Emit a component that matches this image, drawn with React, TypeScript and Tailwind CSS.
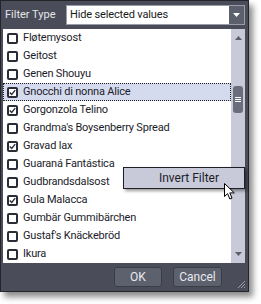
import React from "react";

const items: { name: string; checked: boolean }[] = [
    { name: "Fløtemysost", checked: false },
    { name: "Geitost", checked: false },
    { name: "Genen Shouyu", checked: false },
    { name: "Gnocchi di nonna Alice", checked: true },
    { name: "Gorgonzola Telino", checked: true },
    { name: "Grandma's Boysenberry Spread", checked: false },
    { name: "Gravad lax", checked: true },
    { name: "Guaraná Fantástica", checked: false },
    { name: "Gudbrandsdalsost", checked: false },
    { name: "Gula Malacca", checked: true },
    { name: "Gumbär Gummibärchen", checked: false },
    { name: "Gustaf's Knäckebröd", checked: false },
    { name: "Ikura", checked: false },
];

function CheckBox({ checked }: { checked: boolean }) {
    return (
        <div className="w-[11px] h-[11px] border-2 border-[#2b2d36] rounded-[2px] bg-white flex items-center justify-center shrink-0">
            {checked && (
                <svg width="9" height="9" viewBox="0 0 9 9">
                    <path d="M1 4.5 L3.5 7 L8 1.5" fill="none" stroke="#2b2d36" strokeWidth="1.8" />
                </svg>
            )}
        </div>
    );
}

export default function App() {
    return (
        <div className="relative w-[261px] h-[304px] bg-white" style={{ fontFamily: "Roboto, 'Liberation Sans', Arial, sans-serif" }}>
            <div className="w-[249px] h-[292px] bg-[#4a4d59] border border-[#23252b] shadow-[4px_5px_6px_rgba(0,0,0,0.45)] flex flex-col">
                {/* header */}
                <div className="h-[28px] flex items-center pl-[4px] pr-[3px] shrink-0">
                    <span className="text-[11px] text-[#e4e5ea]">Filter Type</span>
                    <div className="ml-auto w-[179px] h-[20px] border border-[#9a9ca8] bg-white flex">
                        <span className="flex-1 text-[11px] tracking-[-0.15px] text-[#1a1a1a] pl-[3px] leading-[18px]">Hide selected values</span>
                        <div className="w-[15px] bg-[#5c5f6c] flex items-center justify-center">
                            <svg width="7" height="4" viewBox="0 0 7 4"><path d="M0 0 L7 0 L3.5 4 Z" fill="#ffffff" /></svg>
                        </div>
                    </div>
                </div>
                {/* list */}
                <div className="ml-[2px] mr-[3px] h-[234px] bg-white flex overflow-hidden shrink-0">
                    <div className="flex-1">
                        {items.map((it, i) => (
                            <div
                                key={it.name}
                                className={
                                    i === 3
                                        ? "h-[18px] flex items-center gap-[5px] pl-[3px] bg-[#d5dbee] border border-dotted border-[#222]"
                                        : "h-[18px] flex items-center gap-[5px] pl-[4px]"
                                }
                            >
                                <CheckBox checked={it.checked} />
                                <span className="text-[11px] tracking-[-0.2px] text-[#1c1c2a] whitespace-nowrap">{it.name}</span>
                            </div>
                        ))}
                    </div>
                    <div className="w-[14px] bg-[#c8cad9] flex flex-col items-center shrink-0">
                        <svg className="mt-[7px]" width="7" height="4" viewBox="0 0 7 4"><path d="M0 4 L7 4 L3.5 0 Z" fill="#5c5f6c" /></svg>
                        <div className="mt-[46px] w-[10px] h-[27px] rounded-[3px] bg-[#6a6d7b] flex flex-col items-center justify-center gap-[1px]">
                            <div className="w-[6px] h-[1px] bg-white" />
                            <div className="w-[6px] h-[1px] bg-white" />
                            <div className="w-[6px] h-[1px] bg-white" />
                        </div>
                        <svg className="mt-auto mb-[7px]" width="7" height="4" viewBox="0 0 7 4"><path d="M0 0 L7 0 L3.5 4 Z" fill="#5c5f6c" /></svg>
                    </div>
                </div>
                {/* footer */}
                <div className="flex-1 flex items-center justify-end gap-[11px] pr-[26px] relative">
                    <button className="w-[48px] h-[20px] rounded-[3px] bg-[#5d606d] border border-[#3b3d46] text-[12px] text-[#e8e9ee]">OK</button>
                    <button className="w-[49px] h-[20px] rounded-[3px] bg-[#5d606d] border border-[#3b3d46] text-[12px] text-[#e8e9ee]">Cancel</button>
                    <svg className="absolute right-[2px] bottom-[2px]" width="10" height="10" viewBox="0 0 10 10">
                        <path d="M9 2 L2 9 M9 5 L5 9 M9 8 L8 9" stroke="#9a9ca8" strokeWidth="1" />
                    </svg>
                </div>
            </div>
            {/* context menu */}
            <div className="absolute left-[123px] top-[167px] w-[122px] h-[22px] bg-[#c8cad9] border border-[#1e1f24] shadow-[2px_2px_3px_rgba(0,0,0,0.4)] flex items-center justify-center">
                <span className="text-[12px] text-[#1c1c2a] pl-[10px]">Invert Filter</span>
            </div>
            {/* cursor */}
            <svg className="absolute left-[224px] top-[183px]" width="12" height="18" viewBox="0 0 12 18">
                <path d="M0.5 0.5 L0.5 13.5 L3.6 10.6 L5.8 16 L8 15.1 L5.8 9.9 L10.3 9.9 Z" fill="#ffffff" stroke="#000" strokeWidth="1" />
            </svg>
        </div>
    );
}
